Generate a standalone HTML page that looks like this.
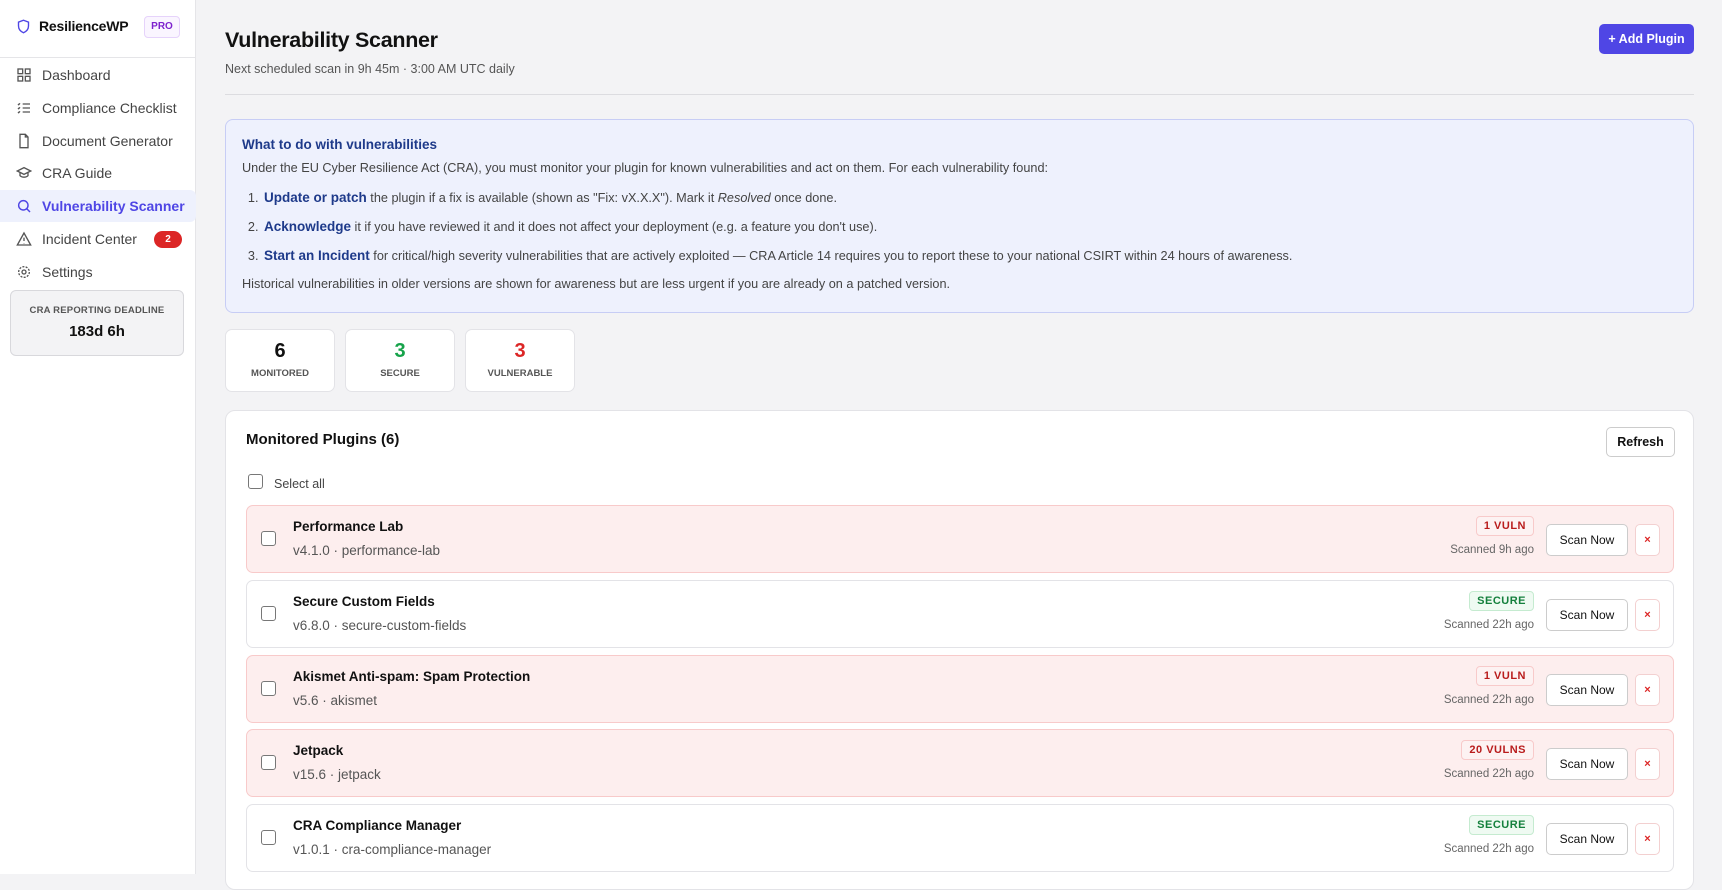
<!DOCTYPE html>
<html><head><meta charset="utf-8"><style>
*{box-sizing:border-box;margin:0;padding:0}
body{width:1722px;height:874px;overflow:hidden;background:#f3f3f5;font-family:"Liberation Sans",sans-serif;color:#111;position:relative}
.sb{position:absolute;left:0;top:0;width:196px;height:874px;background:#fff;border-right:1px solid #e5e5e8}
.logo{position:absolute;left:16px;top:14px;height:24px;display:flex;align-items:center;gap:8px;font-weight:bold;font-size:14px;letter-spacing:-.2px}
.pro{position:absolute;left:144px;top:16px;width:36px;height:22px;border:1px solid #e6d3fb;background:#faf5ff;color:#7e22ce;font-size:10px;font-weight:bold;border-radius:4px;text-align:center;line-height:20px}
.sbl{position:absolute;left:0;top:57px;width:196px;border-top:1px solid #e5e5e8}
.nav{position:absolute;left:0;width:196px;height:32px;display:flex;align-items:center;padding-left:16px;gap:10px;font-size:14px;color:#444}
.nav svg{width:16px;height:16px;flex:none}
.nav.act{background:#eef1fd;color:#4f46e5;font-weight:bold;border-radius:0 6px 6px 0}
.badge{position:absolute;left:154px;top:8px;width:28px;height:17px;border-radius:9px;background:#dc2626;color:#fff;font-size:10px;font-weight:bold;text-align:center;line-height:17px}
.dl{position:absolute;left:10px;top:290px;width:174px;height:66px;border:1px solid #d8d8dc;background:#f3f3f5;border-radius:6px;text-align:center}
.dl .a{font-size:9.5px;font-weight:bold;color:#555;margin-top:14px;letter-spacing:.2px}
.dl .b{font-size:15px;font-weight:bold;margin-top:7px}
h1{position:absolute;left:225px;top:28px;font-size:21.5px;font-weight:bold;letter-spacing:-.3px}
.sub{position:absolute;left:225px;top:62px;font-size:12.5px;color:#555}
.add{position:absolute;left:1599px;top:24px;width:95px;height:30px;background:#4f46e5;color:#fff;font-size:12.5px;font-weight:bold;border-radius:5px;text-align:center;line-height:30px}
.hr{position:absolute;left:225px;top:94px;width:1469px;border-top:1px solid #dcdce0}
.info{position:absolute;left:225px;top:119px;width:1469px;height:194px;background:#eef1fd;border:1px solid #c7cdf5;border-radius:8px;padding:17px 16px;font-size:12.7px;color:#444}
.info h3{font-size:13.5px;color:#1e3a8a;margin-bottom:9px}
.info p{margin-bottom:15px}
.info ol{margin-left:20px;margin-bottom:14px}
.info li{margin-bottom:14px;padding-left:2px}
.info b{color:#1e3a8a;font-size:13.5px}
.stat{position:absolute;top:329px;width:110px;height:63px;background:#fff;border:1px solid #e3e3e7;border-radius:7px;text-align:center}
.stat .n{font-size:20px;font-weight:bold;margin-top:10px}
.stat .l{font-size:9.5px;font-weight:bold;color:#555;margin-top:5px}
.panel{position:absolute;left:225px;top:410px;width:1469px;height:480px;background:#fff;border:1px solid #e3e3e7;border-radius:10px}
.pt{position:absolute;left:20px;top:20px;font-size:15px;font-weight:bold}
.ref{position:absolute;left:1380px;top:16px;width:69px;height:30px;border:1px solid #ccc;border-radius:5px;font-size:12.5px;font-weight:bold;text-align:center;line-height:28px}
.cb{width:15px;height:15px;border:1.5px solid #777;border-radius:3px;background:#fff;position:absolute}
.sa{position:absolute;left:48px;top:66px;font-size:12.5px;color:#444}
.row{position:absolute;left:20px;width:1428px;height:68px;border:1px solid #e3e3e7;border-radius:7px;background:#fff}
.row.v{background:#fdeeee;border-color:#f8caca}
.row .cb{left:14px;top:25px}
.nm{position:absolute;left:46px;top:13px;font-size:13.5px;font-weight:bold}
.ver{position:absolute;left:46px;top:37px;font-size:13.5px;color:#555}
.tag{position:absolute;right:139px;top:10px;height:20px;padding:0 7px;border-radius:4px;font-size:11px;font-weight:bold;line-height:18px;letter-spacing:.5px}
.tv{background:#fdf2f2;border:1px solid #f8caca;color:#b91c1c}
.ts{background:#effaf2;border:1px solid #c5ebd0;color:#15803d}
.sc{position:absolute;right:139px;top:38px;font-size:11.5px;color:#666}
.sn{position:absolute;right:45px;top:18px;width:82px;height:32px;background:#fff;border:1px solid #ccc;border-radius:5px;font-size:12px;text-align:center;line-height:30px}
.x{position:absolute;right:13px;top:18px;width:25px;height:32px;background:#fff;border:1px solid #f3d0d0;border-radius:5px;color:#dc2626;font-size:11px;text-align:center;line-height:30px;font-weight:bold}
</style></head><body>
<div class="sb">
<div class="logo"><svg width="15" height="17" viewBox="0 0 24 24" fill="none" stroke="#4f46e5" stroke-width="2.2"><path d="M12 2l8 3v6c0 5-3.5 9-8 11-4.5-2-8-6-8-11V5z"/></svg>ResilienceWP</div>
<div class="pro">PRO</div>
<div class="sbl"></div>
<div class="nav" style="top:59px"><svg viewBox="0 0 24 24" fill="none" stroke="#555" stroke-width="2"><rect x="3" y="3" width="7" height="7"/><rect x="14" y="3" width="7" height="7"/><rect x="14" y="14" width="7" height="7"/><rect x="3" y="14" width="7" height="7"/></svg>Dashboard</div>
<div class="nav" style="top:92px"><svg viewBox="0 0 24 24" fill="none" stroke="#555" stroke-width="2"><path d="M10 6h11M10 12h11M10 18h11M3 6l1 1 2-2M3 12l1 1 2-2M3 18l1 1 2-2"/></svg>Compliance Checklist</div>
<div class="nav" style="top:125px"><svg viewBox="0 0 24 24" fill="none" stroke="#555" stroke-width="2"><path d="M14 2H6v20h12V6z M14 2v4h4"/></svg>Document Generator</div>
<div class="nav" style="top:157px"><svg viewBox="0 0 24 24" fill="none" stroke="#555" stroke-width="2"><path d="M2 9l10-5 10 5-10 5z M6 11v5c3 3 9 3 12 0v-5"/></svg>CRA Guide</div>
<div class="nav act" style="top:190px"><svg viewBox="0 0 24 24" fill="none" stroke="#4f46e5" stroke-width="2.2"><circle cx="11" cy="11" r="7"/><path d="M16 16l5 5"/></svg>Vulnerability Scanner</div>
<div class="nav" style="top:223px"><svg viewBox="0 0 24 24" fill="none" stroke="#555" stroke-width="2"><path d="M12 3L2 21h20z M12 10v5 M12 18v.5"/></svg>Incident Center<div class="badge">2</div></div>
<div class="nav" style="top:256px"><svg viewBox="0 0 24 24" fill="none" stroke="#555" stroke-width="2"><circle cx="12" cy="12" r="3"/><circle cx="12" cy="12" r="8" stroke-dasharray="3 2"/></svg>Settings</div>
<div class="dl"><div class="a">CRA REPORTING DEADLINE</div><div class="b">183d 6h</div></div>
</div>
<h1>Vulnerability Scanner</h1>
<div class="sub">Next scheduled scan in 9h 45m · 3:00 AM UTC daily</div>
<div class="add">+ Add Plugin</div>
<div class="hr"></div>
<div class="info">
<h3>What to do with vulnerabilities</h3>
<p>Under the EU Cyber Resilience Act (CRA), you must monitor your plugin for known vulnerabilities and act on them. For each vulnerability found:</p>
<ol>
<li><b>Update or patch</b> the plugin if a fix is available (shown as "Fix: vX.X.X"). Mark it <i>Resolved</i> once done.</li>
<li><b>Acknowledge</b> it if you have reviewed it and it does not affect your deployment (e.g. a feature you don't use).</li>
<li><b>Start an Incident</b> for critical/high severity vulnerabilities that are actively exploited — CRA Article 14 requires you to report these to your national CSIRT within 24 hours of awareness.</li>
</ol>
<div>Historical vulnerabilities in older versions are shown for awareness but are less urgent if you are already on a patched version.</div>
</div>
<div class="stat" style="left:225px"><div class="n">6</div><div class="l">MONITORED</div></div>
<div class="stat" style="left:345px"><div class="n" style="color:#16a34a">3</div><div class="l">SECURE</div></div>
<div class="stat" style="left:465px"><div class="n" style="color:#dc2626">3</div><div class="l">VULNERABLE</div></div>
<div class="panel">
<div class="pt">Monitored Plugins (6)</div>
<div class="ref">Refresh</div>
<div class="cb" style="left:22px;top:63px"></div><div class="sa">Select all</div>
<div class="row v" style="top:94px"><div class="cb"></div><div class="nm">Performance Lab</div><div class="ver">v4.1.0 · performance-lab</div><div class="tag tv">1 VULN</div><div class="sc">Scanned 9h ago</div><div class="sn">Scan Now</div><div class="x">×</div></div>
<div class="row" style="top:169px"><div class="cb"></div><div class="nm">Secure Custom Fields</div><div class="ver">v6.8.0 · secure-custom-fields</div><div class="tag ts">SECURE</div><div class="sc">Scanned 22h ago</div><div class="sn">Scan Now</div><div class="x">×</div></div>
<div class="row v" style="top:244px"><div class="cb"></div><div class="nm">Akismet Anti-spam: Spam Protection</div><div class="ver">v5.6 · akismet</div><div class="tag tv">1 VULN</div><div class="sc">Scanned 22h ago</div><div class="sn">Scan Now</div><div class="x">×</div></div>
<div class="row v" style="top:318px"><div class="cb"></div><div class="nm">Jetpack</div><div class="ver">v15.6 · jetpack</div><div class="tag tv">20 VULNS</div><div class="sc">Scanned 22h ago</div><div class="sn">Scan Now</div><div class="x">×</div></div>
<div class="row" style="top:393px"><div class="cb"></div><div class="nm">CRA Compliance Manager</div><div class="ver">v1.0.1 · cra-compliance-manager</div><div class="tag ts">SECURE</div><div class="sc">Scanned 22h ago</div><div class="sn">Scan Now</div><div class="x">×</div></div>
</div>
</body></html>
